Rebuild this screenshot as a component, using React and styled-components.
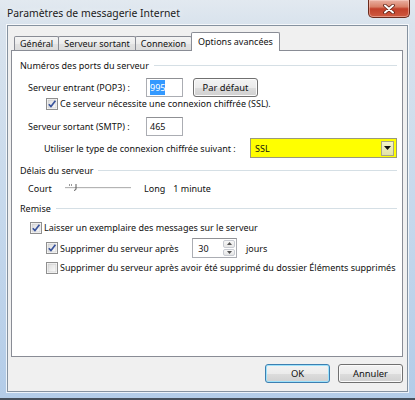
import React from 'react'
import styled, { createGlobalStyle } from 'styled-components'

const GlobalStyle = createGlobalStyle`
  html, body {
    margin: 0;
    padding: 0;
    background: #fff;
  }
`

const Window = styled.div`
  width: 415px;
  height: 400px;
  box-sizing: border-box;
  display: flex;
  flex-direction: column;
  padding: 0 7px 6px 7px;
  background: linear-gradient(180deg, #e2e9f0 0px, #d9e3ed 24px, #c5d8ec 55%, #b3cce8 100%);
  border-bottom: 2px solid #46505c;
  font-family: 'Noto Sans', 'Liberation Sans', sans-serif;
  font-size: 9px;
  color: #111;
`

const TitleBar = styled.div`
  height: 25px;
  display: flex;
  justify-content: space-between;
  align-items: flex-start;
  flex: none;
`

const Title = styled.div`
  height: 25px;
  line-height: 26px;
  font-size: 10.4px;
  color: #1b1b1b;
  text-shadow: 0 0 6px rgba(255, 255, 255, 0.95);
`

const CloseButton = styled.div`
  width: 42px;
  height: 18px;
  box-sizing: border-box;
  margin-right: -2px;
  border: 1px solid #6a2a1c;
  border-top: none;
  border-radius: 0 0 5px 5px;
  background: linear-gradient(180deg, #eab0a2 0%, #d98068 40%, #c2402a 52%, #cf5a40 100%);
  box-shadow: inset 0 0 0 1px rgba(255, 220, 210, 0.45);
  display: flex;
  align-items: center;
  justify-content: center;
`

const Body = styled.div`
  flex: 1;
  display: flex;
  flex-direction: column;
  background: #f0f0f0;
  border: 1px solid #8592a0;
  box-shadow: 0 0 0 1px rgba(255, 255, 255, 0.75);
  padding: 6px 4px 8px 3px;
  min-height: 0;
`

const TabRow = styled.div`
  display: flex;
  align-items: flex-end;
  height: 19px;
  padding-left: 3px;
  margin-bottom: -1px;
  position: relative;
  z-index: 1;
  flex: none;
`

const Tab = styled.div`
  box-sizing: border-box;
  height: ${({ $active }) => ($active ? '19px' : '14px')};
  margin-bottom: ${({ $active }) => ($active ? '0' : '1px')};
  margin-left: -1px;
  padding: 0 ${({ $active }) => ($active ? '6px' : '5px')};
  border: 1px solid #898c95;
  border-bottom: none;
  border-radius: 2px 2px 0 0;
  line-height: ${({ $active }) => ($active ? '17px' : '13px')};
  white-space: nowrap;
  background: ${({ $active }) =>
    $active ? '#fff' : 'linear-gradient(180deg, #f4f4f4 0%, #ececec 50%, #e2e2e2 51%, #dcdcdc 100%)'};
  &:first-child {
    margin-left: 0;
  }
`

const Panel = styled.div`
  flex: 1;
  background: #fff;
  border: 1px solid #898c95;
  padding: 0 5px 0 8px;
  display: flex;
  flex-direction: column;
`

const GroupTitle = styled.div`
  display: flex;
  align-items: center;
  height: 14px;
  gap: 5px;
  margin-top: ${({ $mt }) => $mt}px;
  white-space: nowrap;
  &::after {
    content: '';
    flex: 1;
    height: 1px;
    background: #d5dfe5;
  }
`

const Row = styled.div`
  display: flex;
  align-items: center;
  height: ${({ $h }) => $h}px;
  margin-top: ${({ $mt }) => $mt}px;
  margin-left: ${({ $ml }) => $ml}px;
  white-space: nowrap;
`

const FieldLabel = styled.span`
  flex: none;
  width: ${({ $w }) => $w}px;
`

const TextBox = styled.div`
  box-sizing: border-box;
  width: ${({ $w }) => $w}px;
  height: ${({ $h }) => $h || 19}px;
  border: 1px solid #abadb3;
  border-top-color: #8f9094;
  background: #fff;
  padding-left: 3px;
  display: flex;
  align-items: center;
  position: relative;
`

const Selection = styled.span`
  background: #3399ff;
  color: #fff;
  padding: 1px 0;
`

const Button = styled.div`
  box-sizing: border-box;
  width: 65px;
  height: 19px;
  margin-left: ${({ $ml }) => $ml || 0}px;
  border: 1px solid ${({ $default }) => ($default ? '#3c7fb1' : '#707070')};
  border-radius: 3px;
  background: linear-gradient(180deg, #f3f3f3 0%, #ebebeb 50%, #dddddd 51%, #d0d0d0 100%);
  box-shadow: inset 0 0 0 1px ${({ $default }) => ($default ? '#9ee2fb' : '#fbfbfb')};
  display: flex;
  align-items: center;
  justify-content: center;
  font-size: 9.4px;
`

const CheckLabel = styled.label`
  display: flex;
  align-items: center;
  gap: 2px;
  flex: none;
  width: ${({ $w }) => ($w ? `${$w}px` : 'auto')};
`

const Select = styled.div`
  box-sizing: border-box;
  width: 148px;
  height: 20px;
  border: 1px solid #9a9a7a;
  background: #ffff00;
  display: flex;
  align-items: center;
  justify-content: space-between;
  padding: 0 2px 0 4px;
`

const DropButton = styled.div`
  box-sizing: border-box;
  width: 13px;
  height: 15px;
  border: 1px solid #a6a68a;
  background: linear-gradient(180deg, #f4f4c8 0%, #e2e2a8 100%);
  display: flex;
  align-items: center;
  justify-content: center;
`

const Spin = styled.div`
  position: absolute;
  top: 1px;
  right: 1px;
  bottom: 1px;
  width: 12px;
  display: flex;
  flex-direction: column;
  gap: 1px;
`

const SpinHalf = styled.div`
  flex: 1;
  border: 1px solid #c9ccd3;
  border-radius: 2px;
  background: linear-gradient(180deg, #f7f7f7, #e6e6e6);
  display: flex;
  align-items: center;
  justify-content: center;
`

const Gap = styled.span`
  display: inline-block;
  width: ${({ $w }) => $w}px;
  flex: none;
`

const Footer = styled.div`
  display: flex;
  justify-content: flex-end;
  gap: 8px;
  padding-top: 7px;
  flex: none;
`

const CheckBox = ({ checked }) => (
  <svg width="12" height="12" viewBox="0 0 12 12">
    <defs>
      <linearGradient id="cbfill" x1="0" y1="0" x2="1" y2="1">
        <stop offset="0" stopColor="#dcdcdc" />
        <stop offset="1" stopColor="#fbfbfb" />
      </linearGradient>
    </defs>
    <rect x="0.5" y="0.5" width="11" height="11" fill="#fff" stroke="#8f8f8f" />
    <rect x="2" y="2" width="8" height="8" fill="url(#cbfill)" stroke="#c4c4c4" strokeWidth="0.6" />
    {checked && (
      <path d="M2.8 6.2 L5 8.6 L9.4 2.8" fill="none" stroke="#3a549c" strokeWidth="1.7" strokeLinejoin="round" />
    )}
  </svg>
)

const Slider = () => (
  <svg width="66" height="14" viewBox="0 0 66 14">
    <line x1="0" y1="6.5" x2="66" y2="6.5" stroke="#b4b4b4" />
    <line x1="0" y1="7.5" x2="66" y2="7.5" stroke="#f2f2f2" />
    <line x1="4.5" y1="3" x2="4.5" y2="5" stroke="#9a9a9a" />
    <line x1="6.5" y1="3" x2="6.5" y2="5" stroke="#9a9a9a" />
    <path d="M11 3 L11 8.5 L9 9.5" fill="none" stroke="#5a5a5a" strokeWidth="1" />
  </svg>
)

export default function App() {
  return (
    <>
      <GlobalStyle />
      <Window>
        <TitleBar>
          <Title>Paramètres de messagerie Internet</Title>
          <CloseButton>
            <svg width="12" height="10" viewBox="0 0 12 10">
              <path d="M2 1.5 L10 8.5 M10 1.5 L2 8.5" stroke="#5b1f14" strokeWidth="3.6" strokeLinecap="round" />
              <path d="M2 1.5 L10 8.5 M10 1.5 L2 8.5" stroke="#fff" strokeWidth="2" strokeLinecap="round" />
            </svg>
          </CloseButton>
        </TitleBar>
        <Body>
          <TabRow>
            <Tab>Général</Tab>
            <Tab>Serveur sortant</Tab>
            <Tab>Connexion</Tab>
            <Tab $active>Options avancées</Tab>
          </TabRow>
          <Panel>
            <GroupTitle $mt={7}>Numéros des ports du serveur</GroupTitle>
            <Row $h={19} $mt={6} $ml={8}>
              <FieldLabel $w={118}>Serveur entrant (POP3) :</FieldLabel>
              <TextBox $w={37}>
                <Selection>995</Selection>
              </TextBox>
              <Button $ml={10}>Par défaut</Button>
            </Row>
            <Row $h={13} $mt={0} $ml={26}>
              <CheckLabel>
                <CheckBox checked />
                Ce serveur nécessite une connexion chiffrée (SSL).
              </CheckLabel>
            </Row>
            <Row $h={19} $mt={7} $ml={8}>
              <FieldLabel $w={118}>Serveur sortant (SMTP) :</FieldLabel>
              <TextBox $w={37}>465</TextBox>
            </Row>
            <Row $h={20} $mt={2} $ml={24}>
              <FieldLabel $w={206}>Utiliser le type de connexion chiffrée suivant :</FieldLabel>
              <Select>
                SSL
                <DropButton>
                  <svg width="7" height="4" viewBox="0 0 7 4">
                    <path d="M0 0 L7 0 L3.5 4 Z" fill="#111" />
                  </svg>
                </DropButton>
              </Select>
            </Row>
            <GroupTitle $mt={5}>Délais du serveur</GroupTitle>
            <Row $h={14} $mt={4} $ml={8}>
              <FieldLabel $w={37}>Court</FieldLabel>
              <Slider />
              <Gap $w={13} />
              Long
              <Gap $w={8} />
              1 minute
            </Row>
            <GroupTitle $mt={6}>Remise</GroupTitle>
            <Row $h={13} $mt={6} $ml={10}>
              <CheckLabel>
                <CheckBox checked />
                Laisser un exemplaire des messages sur le serveur
              </CheckLabel>
            </Row>
            <Row $h={20} $mt={4} $ml={26}>
              <CheckLabel $w={146}>
                <CheckBox checked />
                Supprimer du serveur après
              </CheckLabel>
              <TextBox $w={45} $h={20}>
                &nbsp;30
                <Spin>
                  <SpinHalf>
                    <svg width="5" height="3" viewBox="0 0 5 3">
                      <path d="M0 3 L5 3 L2.5 0 Z" fill="#555" />
                    </svg>
                  </SpinHalf>
                  <SpinHalf>
                    <svg width="5" height="3" viewBox="0 0 5 3">
                      <path d="M0 0 L5 0 L2.5 3 Z" fill="#555" />
                    </svg>
                  </SpinHalf>
                </Spin>
              </TextBox>
              <Gap $w={9} />
              jours
            </Row>
            <Row $h={13} $mt={3} $ml={26}>
              <CheckLabel>
                <CheckBox />
                Supprimer du serveur après avoir été supprimé du dossier Éléments supprimés
              </CheckLabel>
            </Row>
          </Panel>
          <Footer>
            <Button $default>OK</Button>
            <Button>Annuler</Button>
          </Footer>
        </Body>
      </Window>
    </>
  )
}
